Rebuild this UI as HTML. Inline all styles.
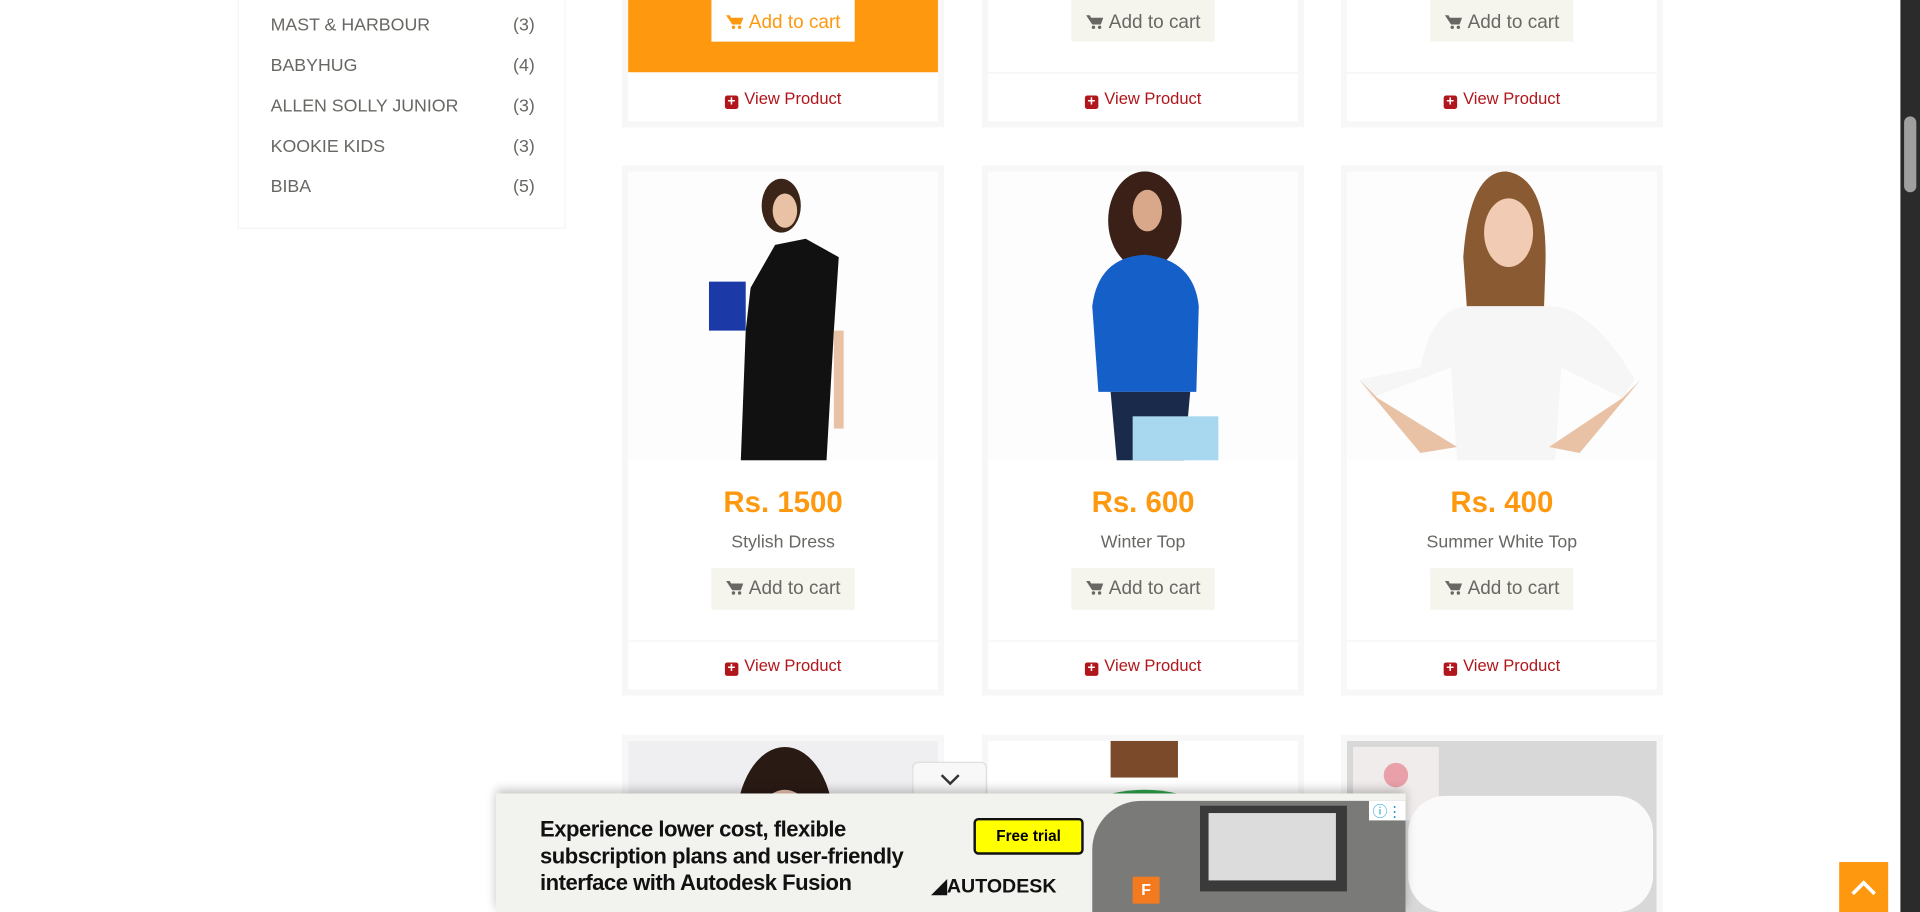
<!DOCTYPE html>
<html><head><meta charset="utf-8"><style>
html,body{margin:0;padding:0;overflow:hidden;background:#fff;width:1920px;height:912px}
#o{position:fixed;left:0;top:0;width:1920px;height:912px;overflow:hidden}
#w{position:absolute;left:0;top:0;width:1568px;height:745px;overflow:hidden;transform:scale(1.22449);transform-origin:0 0;font-family:"Liberation Sans",sans-serif}
.a{position:absolute}
.side{left:194px;top:-2px;width:266px;height:188px;border:1px solid #f5f5f5;border-top:none}
.li{position:absolute;left:26px;font-size:14.5px;color:#696763}
.li span{position:absolute;left:198px}
.card{position:absolute;width:253px;border:5px solid #f7f7f7;background:#fff}
.price{position:absolute;width:253px;text-align:center;color:#fe980f;font-weight:bold;font-size:24px}
.nm{position:absolute;width:253px;text-align:center;color:#696763;font-size:14.5px}
.btn{position:absolute;left:68px;width:117px;height:34px;background:#f5f5ed;color:#696763;font-size:15.5px;line-height:34px;text-align:center}
.vp{position:absolute;width:253px;text-align:center;color:#b0161b;font-size:13.5px}
.plus{display:inline-block;width:11px;height:11px;background:#b0161b;border-radius:2px;color:#fff;font-size:11px;line-height:11px;font-weight:bold;vertical-align:-1px;margin-right:5px}
.sep{position:absolute;left:0;width:253px;height:1px;background:#f3f3f3}
.cart{display:inline-block;width:14px;height:12px;margin-right:5px;vertical-align:-1px}
</style></head><body><div id="o"><div id="w">
<svg width="0" height="0" style="position:absolute"><defs><symbol id="c" viewBox="0 0 14 12"><path d="M0 0.5h3l1 2h10l-2 5.5H5z" fill="currentColor"/><circle cx="6" cy="10.3" r="1.4" fill="currentColor"/><circle cx="11" cy="10.3" r="1.4" fill="currentColor"/></symbol></defs></svg>
<div class="a side">
<div class="li" style="top:15px">MAST &amp; HARBOUR<span>(3)</span></div>
<div class="li" style="top:48px">BABYHUG<span>(4)</span></div>
<div class="li" style="top:81px">ALLEN SOLLY JUNIOR<span>(3)</span></div>
<div class="li" style="top:114px">KOOKIE KIDS<span>(3)</span></div>
<div class="li" style="top:147px">BIBA<span>(5)</span></div>
</div>

<div class="card" style="left:508px;top:-10px;height:104px">
<div class="a" style="left:0;top:0;width:253px;height:64px;background:#fe980f"></div>
<div class="btn" style="top:0;height:39px;line-height:48px;background:#fff;color:#fe980f"><svg class="cart"><use href="#c"/></svg>Add to cart</div>
<div class="vp" style="top:78px"><span class="plus">+</span>View Product</div></div>
<div class="card" style="left:802px;top:-10px;height:104px">
<div class="btn" style="top:0;height:39px;line-height:48px"><svg class="cart"><use href="#c"/></svg>Add to cart</div><div class="sep" style="top:64px"></div>
<div class="vp" style="top:78px"><span class="plus">+</span>View Product</div></div>
<div class="card" style="left:1095px;top:-10px;height:104px">
<div class="btn" style="top:0;height:39px;line-height:48px"><svg class="cart"><use href="#c"/></svg>Add to cart</div><div class="sep" style="top:64px"></div>
<div class="vp" style="top:78px"><span class="plus">+</span>View Product</div></div>

<div class="card" style="left:508px;top:135px;height:423px">
<svg class="a" style="left:0;top:0" width="253" height="236"><rect width="253" height="236" fill="#fdfdfd"/><ellipse cx="125" cy="28" rx="16" ry="22" fill="#3b2418"/><ellipse cx="128" cy="32" rx="10" ry="14" fill="#e9c2a6"/><path d="M100 95 L120 60 L145 55 L172 70 L168 130 L162 236 L92 236 L96 130Z" fill="#111"/><rect x="66" y="90" width="30" height="40" fill="#1b3aa8"/><rect x="168" y="130" width="8" height="80" fill="#e9c2a6"/></svg>
<div class="price" style="top:257px">Rs. 1500</div><div class="nm" style="top:295px">Stylish Dress</div>
<div class="btn" style="top:324px"><svg class="cart"><use href="#c"/></svg>Add to cart</div><div class="sep" style="top:383px"></div>
<div class="vp" style="top:396px"><span class="plus">+</span>View Product</div></div>

<div class="card" style="left:802px;top:135px;height:423px">
<svg class="a" style="left:0;top:0" width="253" height="236"><rect width="253" height="236" fill="#fdfdfd"/><ellipse cx="128" cy="40" rx="30" ry="40" fill="#3a2016"/><ellipse cx="130" cy="32" rx="12" ry="17" fill="#d9a88a"/><path d="M85 110 Q90 70 128 68 Q168 72 172 110 L170 180 L90 180Z" fill="#1560c8"/><path d="M100 180 L165 180 L160 236 L105 236Z" fill="#1a2a4a"/><rect x="118" y="200" width="70" height="36" fill="#a8d8f0"/></svg>
<div class="price" style="top:257px">Rs. 600</div><div class="nm" style="top:295px">Winter Top</div>
<div class="btn" style="top:324px"><svg class="cart"><use href="#c"/></svg>Add to cart</div><div class="sep" style="top:383px"></div>
<div class="vp" style="top:396px"><span class="plus">+</span>View Product</div></div>

<div class="card" style="left:1095px;top:135px;height:423px">
<svg class="a" style="left:0;top:0" width="253" height="236"><rect width="253" height="236" fill="#fdfdfd"/><path d="M95 70 Q100 0 130 0 Q165 5 162 80 L160 140 L100 140Z" fill="#8a5a32"/><ellipse cx="132" cy="50" rx="20" ry="28" fill="#f1cbb3"/><path d="M60 160 Q70 110 100 110 L165 110 Q200 110 235 170 L225 185 L175 160 L170 236 L90 236 L85 160 L20 185 L10 170Z" fill="#f6f6f6"/><path d="M10 170 L60 230 L90 225 L25 185Z" fill="#e9c2a6"/><path d="M240 170 L190 230 L165 225 L225 185Z" fill="#e9c2a6"/></svg>
<div class="price" style="top:257px">Rs. 400</div><div class="nm" style="top:295px">Summer White Top</div>
<div class="btn" style="top:324px"><svg class="cart"><use href="#c"/></svg>Add to cart</div><div class="sep" style="top:383px"></div>
<div class="vp" style="top:396px"><span class="plus">+</span>View Product</div></div>

<div class="card" style="left:508px;top:600px;height:140px"><svg class="a" width="253" height="140"><rect width="253" height="140" fill="#efeff1"/><ellipse cx="128" cy="70" rx="40" ry="65" fill="#2a1a14"/><ellipse cx="128" cy="75" rx="25" ry="35" fill="#eac4b0"/></svg></div>
<div class="card" style="left:802px;top:600px;height:140px"><svg class="a" width="253" height="140"><rect width="253" height="140" fill="#fff"/><path d="M60 60 Q128 20 195 60 L200 140 L55 140Z" fill="#2fa24a"/><rect x="100" y="0" width="55" height="30" fill="#7a4a2a"/></svg></div>
<div class="card" style="left:1095px;top:600px;height:140px"><svg class="a" width="253" height="140"><rect width="253" height="140" fill="#d8d8d8"/><rect x="5" y="5" width="70" height="60" fill="#f0ecec"/><circle cx="40" cy="28" r="10" fill="#eaa0a8"/><rect x="50" y="45" width="200" height="95" rx="30" fill="#fafafa"/></svg></div>

<div class="a" style="left:745px;top:622px;width:59px;height:28px;background:#f8f8f8;border:1px solid #ddd;border-bottom:none;border-radius:5px 5px 0 0;text-align:center"><svg width="16" height="10" style="margin-top:9px"><path d="M1 1 L8 8 L15 1" stroke="#333" stroke-width="2" fill="none"/></svg></div>
<div class="a" style="left:405px;top:648px;width:743px;height:97px;background:#f2f2ee;box-shadow:0 -3px 8px rgba(0,0,0,.25);overflow:hidden">
<div class="a" style="left:36px;top:18px;font-size:18px;line-height:22px;font-weight:bold;color:#111;letter-spacing:-.4px">Experience lower cost, flexible<br>subscription plans and user-friendly<br>interface with Autodesk Fusion</div>
<div class="a" style="left:390px;top:20px;width:86px;height:26px;background:#ffff00;border:2px solid #111;border-radius:4px;font-size:12.5px;font-weight:bold;line-height:26px;text-align:center">Free trial</div>
<div class="a" style="left:356px;top:66px;font-size:16px;font-weight:bold;color:#111">&#9698;AUTODESK</div>
<div class="a" style="left:487px;top:6px;width:256px;height:91px;background:#7a7a78;border-radius:40px 0 0 0"></div>
<div class="a" style="left:575px;top:10px;width:120px;height:70px;background:#3a3a3a"></div><div class="a" style="left:582px;top:16px;width:104px;height:55px;background:#dcdcdc"></div>
<div class="a" style="left:520px;top:68px;width:22px;height:22px;background:#f47a20;color:#fff;font-weight:bold;font-size:13px;text-align:center;line-height:22px">F</div>
<div class="a" style="left:713px;top:6px;width:30px;height:16px;background:#fff;color:#1aa0d8;font-size:12px;text-align:center">ⓘ⋮</div>
</div>
<div class="a" style="left:1502px;top:704px;width:40px;height:41px;background:#fe980f;color:#fff;text-align:center"><svg width="22" height="14" style="margin-top:14px"><path d="M2 12 L11 3 L20 12" stroke="#fff" stroke-width="3" fill="none"/></svg></div>
<div class="a" style="left:1552px;top:0;width:16px;height:745px;background:#2b2b2b"></div>
<div class="a" style="left:1555px;top:95px;width:10px;height:62px;background:#9f9f9f;border-radius:5px"></div>
</div></div></body></html>
